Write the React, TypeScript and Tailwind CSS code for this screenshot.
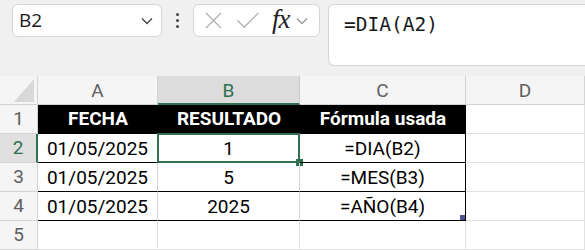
import React from 'react';

const cols = ['A', 'B', 'C', 'D'];

const rows = [
  ['01/05/2025', '1', '=DIA(B2)'],
  ['01/05/2025', '5', '=MES(B3)'],
  ['01/05/2025', '2025', '=AÑO(B4)'],
];

function Chevron({ className }: { className?: string }) {
  return (
    <svg viewBox="0 0 12 8" className={className} fill="none" stroke="currentColor" strokeWidth="1.3">
      <polyline points="1,1.5 6,6.5 11,1.5" />
    </svg>
  );
}

export default function App() {
  return (
    <div className="w-[585px] h-[250px] overflow-hidden bg-[#f0f0f0] font-['Roboto',sans-serif]">
      {/* formula bar area */}
      <div className="flex items-start h-[76px] pt-[4px] pl-[12px]">
        <div className="w-[150px] h-[33px] bg-white border border-[#d6d6d6] rounded-[6px] flex items-center pl-[6px] pr-[8px]">
          <span className="text-[19px] text-[#1a1a1a] font-['Open_Sans',sans-serif] leading-none">B2</span>
          <Chevron className="ml-auto w-[12px] h-[8px] text-[#444]" />
        </div>
        <div className="w-[31px] h-[33px] flex flex-col items-center justify-center gap-[3px]">
          <span className="w-[3px] h-[3px] bg-[#444] rounded-full" />
          <span className="w-[3px] h-[3px] bg-[#444] rounded-full" />
          <span className="w-[3px] h-[3px] bg-[#444] rounded-full" />
        </div>
        <div className="w-[127px] h-[33px] bg-white border border-[#d6d6d6] rounded-[6px] flex items-center pl-[10px]">
          <svg viewBox="0 0 20 20" className="w-[19px] h-[19px]" fill="none" stroke="#a8a8a8" strokeWidth="1.3">
            <line x1="2" y1="2" x2="18" y2="18" />
            <line x1="18" y1="2" x2="2" y2="18" />
          </svg>
          <svg viewBox="0 0 24 20" className="ml-[13px] w-[24px] h-[19px]" fill="none" stroke="#a8a8a8" strokeWidth="1.3">
            <polyline points="1,10 8,17 23,2" />
          </svg>
          <span className="ml-[12px] font-['Liberation_Serif',serif] italic text-[27px] leading-none text-[#222] tracking-[-1px] pb-[2px]">fx</span>
          <Chevron className="ml-[6px] w-[12px] h-[8px] text-[#999]" />
        </div>
        <div className="ml-[8px] flex-1 h-[62px] bg-white border border-r-0 border-[#d6d6d6] rounded-l-[6px] pl-[15px] pt-[9px]">
          <span className="font-['DejaVu_Sans_Mono',monospace] text-[19.5px] leading-none text-[#1a1a1a]">=DIA(A2)</span>
        </div>
      </div>

      {/* grid */}
      <div className="grid grid-cols-[38px_120px_142px_166px_1fr] grid-rows-[29px_29px_29px_29px_29px_29px] bg-white">
        {/* header row */}
        <div className="bg-[#f5f5f5] border-r border-b border-[#d4d4d4] flex items-end justify-end pr-[3px] pb-[2px]">
          <svg viewBox="0 0 20 23" className="w-[20px] h-[23px]">
            <polygon points="20,0 20,23 0,23" fill="#d8d8d8" />
          </svg>
        </div>
        {cols.map((c) => (
          <div
            key={c}
            className={
              c === 'B'
                ? 'bg-[#dcdcdc] border-r border-[#c8c8c8] border-b-2 border-b-[#2e7050] flex items-center justify-center pt-[3px] text-[19px] text-[#2e7050]'
                : 'bg-[#f5f5f5] border-r border-b border-[#d4d4d4] flex items-center justify-center pt-[3px] text-[19px] text-[#5f5f5f]'
            }
          >
            {c}
          </div>
        ))}

        {/* row 1 */}
        <div className="bg-[#f5f5f5] border-r border-b border-[#d4d4d4] flex items-center justify-center text-[19px] text-[#5f5f5f]">1</div>
        {['FECHA', 'RESULTADO', 'Fórmula usada'].map((h) => (
          <div key={h} className="bg-black border-b border-black flex items-center justify-center text-[19px] font-bold text-white">
            {h}
          </div>
        ))}
        <div className="border-r border-b border-[#e1e1e1]" />

        {rows.map((r, i) => {
          const n = i + 2;
          const sel = n === 2;
          return (
            <React.Fragment key={n}>
              <div
                className={
                  sel
                    ? 'bg-[#e0e0e0] border-r-2 border-r-[#2e7050] border-b border-b-[#d4d4d4] flex items-center justify-center text-[19px] text-[#2e7050]'
                    : 'bg-[#f5f5f5] border-r border-b border-[#d4d4d4] flex items-center justify-center text-[19px] text-[#5f5f5f]'
                }
              >
                {n}
              </div>
              <div className="border-r border-[#d4d4d4] border-b border-b-black flex items-center justify-center pt-[2px] text-[19px] text-black">
                {r[0]}
              </div>
              <div className="relative border-r border-[#d4d4d4] border-b border-b-black flex items-center justify-center pt-[2px] text-[19px] text-black">
                {r[1]}
                {sel && (
                  <>
                    <div className="absolute -left-[1px] -top-[1px] -right-[1px] -bottom-[1px] border-2 border-[#2e7050]" />
                    <div className="absolute -right-[4px] -bottom-[4px] w-[7px] h-[7px] bg-[#2e7050]" />
                  </>
                )}
              </div>
              <div className="relative border-r border-r-black border-b border-b-black flex items-center justify-center pt-[2px] text-[19px] text-black">
                {r[2]}
                {n === 4 && <div className="absolute right-0 bottom-0 w-[5px] h-[5px] bg-[#4a5190]" />}
              </div>
              <div className="border-r border-b border-[#e1e1e1]" />
            </React.Fragment>
          );
        })}

        {/* row 5 */}
        <div className="bg-[#f5f5f5] border-r border-b border-[#d4d4d4] flex items-center justify-center text-[19px] text-[#5f5f5f]">5</div>
        <div className="border-r border-b border-[#e1e1e1]" />
        <div className="border-r border-b border-[#e1e1e1]" />
        <div className="border-r border-b border-[#e1e1e1]" />
        <div className="border-r border-b border-[#e1e1e1]" />
      </div>
    </div>
  );
}
